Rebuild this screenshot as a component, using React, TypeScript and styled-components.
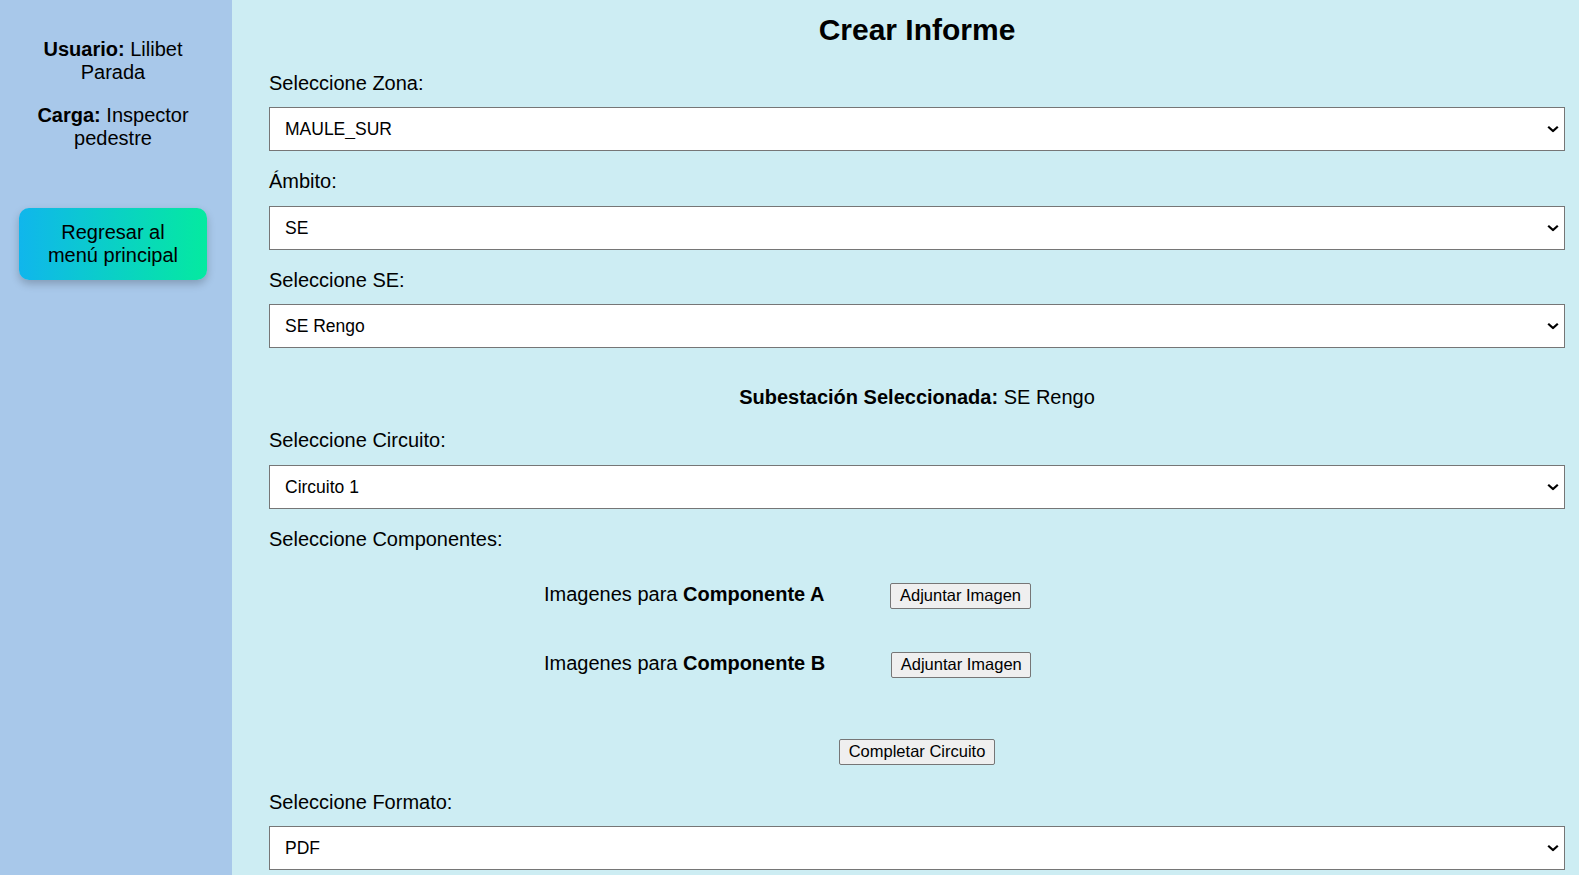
import React, { useState } from "react";
import styled, { createGlobalStyle } from "styled-components";

const GlobalStyle = createGlobalStyle`
  html, body {
    margin: 0;
    padding: 0;
    overflow: hidden;
  }
  body {
    font-family: "Liberation Sans", Arial, sans-serif;
    color: #000;
  }
  * { box-sizing: border-box; }
`;

const Layout = styled.div`
  display: flex;
  min-height: 100vh;
`;

const Sidebar = styled.aside`
  width: 232px;
  flex-shrink: 0;
  background: #a8c8ea;
  padding: 18px 25px 20px 19px;
  text-align: center;
  font-size: 20px;
  line-height: 23px;
`;

const UserInfo = styled.p`
  margin: 20px 0;
`;

const BackButton = styled.button`
  display: block;
  width: 188px;
  margin-top: 58px;
  padding: 13px 20px;
  border: none;
  border-radius: 10px;
  background: linear-gradient(90deg, #10b6ec 0%, #04eaa0 100%);
  box-shadow: 0 4px 8px rgba(0, 0, 0, 0.22);
  font-family: inherit;
  font-size: 20px;
  line-height: 23px;
  color: #000;
  cursor: pointer;
`;

const Main = styled.main`
  flex: 1;
  min-width: 0;
  background: #cdedf3;
  padding: 13px 14px 0 37px;
`;

const Title = styled.h1`
  margin: 0 0 24.5px;
  text-align: center;
  font-size: 30px;
  font-weight: 700;
`;

const FieldLabel = styled.label`
  display: block;
  font-size: 20px;
  line-height: 23px;
  margin-bottom: 12.5px;
`;

const SelectField = styled.div`
  position: relative;
  margin-bottom: 19px;
`;

const Select = styled.select`
  display: block;
  width: 100%;
  height: 44px;
  margin: 0;
  padding: 0 30px 0 15px;
  appearance: none;
  -webkit-appearance: none;
  font-family: inherit;
  font-size: 17.5px;
  color: #000;
  background: #fff;
  border: 1px solid #767676;
  border-radius: 0;
`;

const Chevron = styled.svg`
  position: absolute;
  right: 6px;
  top: 50%;
  width: 12px;
  height: 7px;
  transform: translateY(-50%);
  pointer-events: none;
`;

const SelectedInfo = styled.p`
  margin: 38px 0 20px;
  text-align: center;
  font-size: 20px;
  line-height: 23px;
`;

const ComponentList = styled.div`
  margin-top: 32px;
  display: flex;
  flex-direction: column;
  gap: 43px;
  padding-left: 275px;
`;

const ComponentRow = styled.div`
  display: flex;
  align-items: flex-start;
  gap: 66px;
`;

const ComponentName = styled.span`
  font-size: 20px;
  line-height: 23px;
`;

const PlainButton = styled.button`
  padding: 2.5px 8.5px;
  font-family: inherit;
  font-size: 16.5px;
  line-height: normal;
  color: #000;
  background: #efefef;
  border: 1px solid #767676;
  border-radius: 2px;
  cursor: pointer;
`;

const CenterBlock = styled.div`
  margin: 61px 0 26px;
  text-align: center;
`;

type DropdownProps = {
  id: string;
  value: string;
  options: string[];
  onChange: (v: string) => void;
};

function Dropdown({ id, value, options, onChange }: DropdownProps) {
  return (
    <SelectField>
      <Select id={id} value={value} onChange={(e) => onChange(e.target.value)}>
        {options.map((o) => (
          <option key={o}>{o}</option>
        ))}
      </Select>
      <Chevron viewBox="0 0 12 7" aria-hidden="true">
        <polyline
          points="1.2,1.2 6,5.6 10.8,1.2"
          fill="none"
          stroke="#000"
          strokeWidth="2.2"
          strokeLinejoin="miter"
        />
      </Chevron>
    </SelectField>
  );
}

const zonas = ["MAULE_SUR", "MAULE_NORTE", "O'HIGGINS"];
const ambitos = ["SE", "Línea"];
const subestaciones = ["SE Rengo", "SE Talca", "SE Curicó"];
const circuitos = ["Circuito 1", "Circuito 2", "Circuito 3"];
const formatos = ["PDF", "Word", "Excel"];
const componentes = ["A", "B"];

export default function App() {
  const [zona, setZona] = useState(zonas[0]);
  const [ambito, setAmbito] = useState(ambitos[0]);
  const [se, setSe] = useState(subestaciones[0]);
  const [circuito, setCircuito] = useState(circuitos[0]);
  const [formato, setFormato] = useState(formatos[0]);

  return (
    <>
      <GlobalStyle />
      <Layout>
        <Sidebar>
          <UserInfo>
            <strong>Usuario:</strong> Lilibet Parada
          </UserInfo>
          <UserInfo>
            <strong>Carga:</strong> Inspector pedestre
          </UserInfo>
          <BackButton>Regresar al menú principal</BackButton>
        </Sidebar>
        <Main>
          <Title>Crear Informe</Title>

          <FieldLabel htmlFor="zona">Seleccione Zona:</FieldLabel>
          <Dropdown id="zona" value={zona} options={zonas} onChange={setZona} />

          <FieldLabel htmlFor="ambito">Ámbito:</FieldLabel>
          <Dropdown id="ambito" value={ambito} options={ambitos} onChange={setAmbito} />

          <FieldLabel htmlFor="se">Seleccione SE:</FieldLabel>
          <Dropdown id="se" value={se} options={subestaciones} onChange={setSe} />

          <SelectedInfo>
            <strong>Subestación Seleccionada:</strong> {se}
          </SelectedInfo>

          <FieldLabel htmlFor="circuito">Seleccione Circuito:</FieldLabel>
          <Dropdown id="circuito" value={circuito} options={circuitos} onChange={setCircuito} />

          <FieldLabel>Seleccione Componentes:</FieldLabel>
          <ComponentList>
            {componentes.map((c) => (
              <ComponentRow key={c}>
                <ComponentName>
                  Imagenes para <strong>Componente {c}</strong>
                </ComponentName>
                <PlainButton type="button">Adjuntar Imagen</PlainButton>
              </ComponentRow>
            ))}
          </ComponentList>

          <CenterBlock>
            <PlainButton type="button">Completar Circuito</PlainButton>
          </CenterBlock>

          <FieldLabel htmlFor="formato">Seleccione Formato:</FieldLabel>
          <Dropdown id="formato" value={formato} options={formatos} onChange={setFormato} />
        </Main>
      </Layout>
    </>
  );
}
